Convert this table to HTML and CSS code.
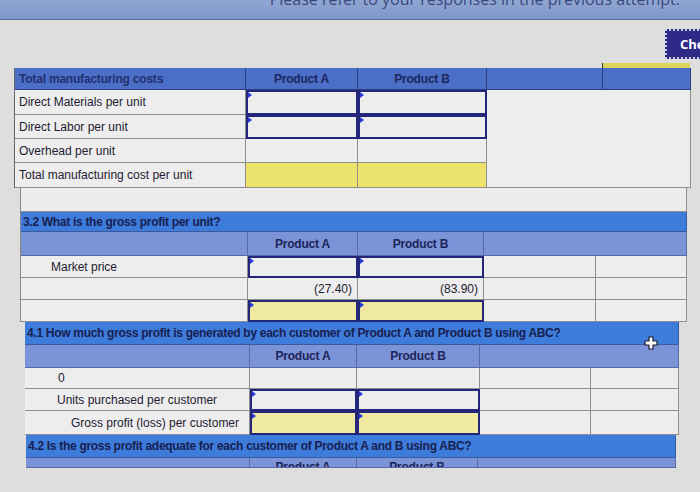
FILE: index.html
```html
<!DOCTYPE html>
<html>
<head>
<meta charset="utf-8">
<link rel="stylesheet" href="styles.css">
</head>
<body>
<div class="topbar"><span class="topbar-text">Please refer to your responses in the previous attempt.</span></div>
<div class="toolbar"><button class="check">Check my work</button></div>
<div class="strip"></div>

<div class="sheet s1">
  <div class="c hd lbl">Total manufacturing costs</div>
  <div class="c hd ctr">Product A</div>
  <div class="c hd ctr">Product B</div>
  <div class="c hd"></div>
  <div class="c hd"></div>

  <div class="c lbl">Direct Materials per unit</div>
  <div class="c inp"></div>
  <div class="c inp"></div>
  <div class="c merged"></div>

  <div class="c lbl">Direct Labor per unit</div>
  <div class="c inp"></div>
  <div class="c inp"></div>

  <div class="c lbl">Overhead per unit</div>
  <div class="c"></div>
  <div class="c"></div>

  <div class="c lbl">Total manufacturing cost per unit</div>
  <div class="c yel"></div>
  <div class="c yel"></div>
</div>

<div class="sheet s2">
  <div class="c full blank"></div>
  <div class="c full qh">3.2 What is the gross profit per unit?</div>
  <div class="c sub"></div>
  <div class="c sub ctr">Product A</div>
  <div class="c sub ctr">Product B</div>
  <div class="c sub span2"></div>

  <div class="c ind1">Market price</div>
  <div class="c inp"></div>
  <div class="c inp"></div>
  <div class="c"></div>
  <div class="c"></div>

  <div class="c"></div>
  <div class="c num">(27.40)</div>
  <div class="c num">(83.90)</div>
  <div class="c"></div>
  <div class="c"></div>

  <div class="c"></div>
  <div class="c inp lyel"></div>
  <div class="c inp lyel"></div>
  <div class="c"></div>
  <div class="c"></div>
</div>

<div class="sheet s3">
  <div class="c full qh q41">4.1 How much gross profit is generated by each customer of Product A and Product B using ABC?<svg class="cursor" width="14" height="14" viewBox="0 0 14 14"><path d="M5 1h4v4h4v4H9v4H5V9H1V5h4z" fill="#fff" stroke="#1a1a2a" stroke-width="1.2" stroke-linejoin="round"/></svg></div>
  <div class="c sub"></div>
  <div class="c sub ctr">Product A</div>
  <div class="c sub ctr">Product B</div>
  <div class="c sub span2"></div>

  <div class="c ind2">0</div>
  <div class="c"></div>
  <div class="c"></div>
  <div class="c"></div>
  <div class="c"></div>

  <div class="c ind3">Units purchased per customer</div>
  <div class="c inp"></div>
  <div class="c inp"></div>
  <div class="c"></div>
  <div class="c"></div>

  <div class="c ind4">Gross profit (loss) per customer</div>
  <div class="c inp lyel"></div>
  <div class="c inp lyel"></div>
  <div class="c"></div>
  <div class="c"></div>
</div>

<div class="sheet s4">
  <div class="c full qh">4.2 Is the gross profit adequate for each customer of Product A and B using ABC?</div>
  <div class="c sub cut"></div>
  <div class="c sub cut ctr">Product A</div>
  <div class="c sub cut ctr">Product B</div>
  <div class="c sub cut span2"></div>
</div>
</body>
</html>
```

FILE: styles.css
```css
* { box-sizing: border-box; }
html, body {
  margin: 0;
  padding: 0;
  width: 700px;
  height: 492px;
  overflow: hidden;
  background: #dedede;
  font-family: "Liberation Sans", Arial, sans-serif;
  font-size: 12px;
  color: #1e2030;
}
.topbar {
  height: 20px;
  background: linear-gradient(#90a6d2, #7f98ca);
  border-bottom: 1px solid #5b6a98;
  overflow: hidden;
  text-align: right;
  padding-right: 20px;
}
.topbar-text {
  display: block;
  font-family: "Open Sans", sans-serif;
  font-size: 16px;
  color: #3a4880;
  margin-top: -11px;
  line-height: 20px;
}
.toolbar {
  height: 43px;
  padding-top: 9px;
  padding-left: 665px;
  white-space: nowrap;
}
.check {
  height: 30px;
  background: #2f2a88;
  color: #fff;
  border: 2px dotted #c8c8e8;
  font-family: "Open Sans", sans-serif;
  font-weight: 700;
  font-size: 13px;
  padding: 0 10px 0 13px;
  margin: 0;
}
.strip {
  margin-left: 602px;
  width: 88px;
  height: 5px;
  background: #dcd35a;
  border-left: 1px solid #333;
}
.sheet {
  display: grid;
  background: #ececec;
}
.s1 {
  margin-left: 14px;
  width: 676px;
  grid-template-columns: 231px 112px 129px 116px 88px;
  grid-template-rows: 22px 25px 24px 24px 25px;
  border-left: 1px solid #666;
}
.s2 {
  margin-left: 20px;
  width: 666px;
  grid-template-columns: 227px 110px 126px 112px 91px;
  grid-template-rows: 24px 20px 24px 22px 22px 22px;
  border-left: 1px solid #888;
}
.s3 {
  margin-left: 25px;
  width: 654px;
  grid-template-columns: 225px 107px 123px 111px 88px;
  grid-template-rows: 23px 23px 21px 22px 24px;
}
.s4 {
  margin-left: 26px;
  width: 650px;
  grid-template-columns: 224px 107px 121px 111px 87px;
  grid-template-rows: 23px 10px;
}
.c {
  position: relative;
  display: flex;
  align-items: center;
  border-right: 1px solid #8e8e8e;
  border-bottom: 1px solid #8e8e8e;
  background: #ededed;
  white-space: nowrap;
  overflow: hidden;
}
.lbl { padding-left: 4px; }
.ctr { justify-content: center; }
.num { justify-content: flex-end; padding-right: 5px; }
.ind1 { padding-left: 30px; }
.ind2 { padding-left: 33px; }
.ind3 { padding-left: 32px; }
.ind4 { padding-left: 46px; }
.hd {
  background: #4b6ec6;
  border-color: #2c3f80;
  color: #1d2660;
  font-weight: 700;
  letter-spacing: -0.2px;
}
.hd.lbl { color: #233070; }
.merged {
  grid-column: 4 / 6;
  grid-row: 2 / 6;
}
.full { grid-column: 1 / -1; }
.span2 { grid-column: 4 / 6; }
.blank { background: #ececec; }
.qh {
  background: #3e7cdb;
  border-color: #3a5aa0;
  color: #182050;
  font-weight: 700;
  padding-left: 2px;
  letter-spacing: -0.3px;
}
.q41 {
  justify-content: flex-start;
  overflow: visible;
  z-index: 2;
}
.cursor {
  position: absolute;
  right: 20px;
  top: 14px;
}
.sub {
  background: #7b93d7;
  border-color: #5a6aa8;
  color: #1d2458;
  font-weight: 700;
  letter-spacing: -0.2px;
}
.inp {
  border: 2px solid #24267a;
}
.inp::before {
  content: "";
  position: absolute;
  left: 0;
  top: 0;
  border-top: 3px solid transparent;
  border-bottom: 3px solid transparent;
  border-left: 4px solid #2a3ad8;
}
.yel { background: #ebe36c; }
.lyel { background: #efe9a2; }
.cut {
  align-items: flex-start;
  padding-top: 2px;
  line-height: 14px;
}
```
